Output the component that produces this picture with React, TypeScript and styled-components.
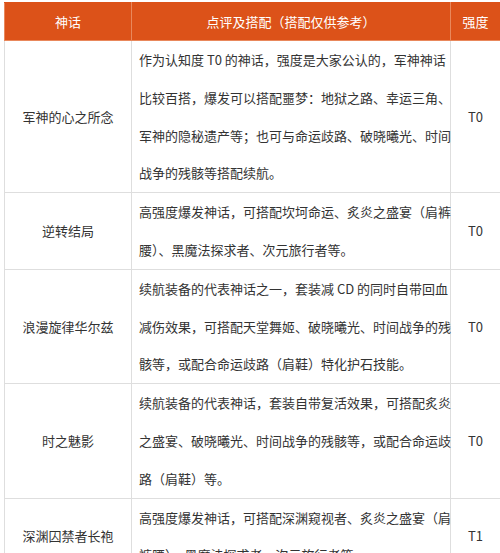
import styled, {createGlobalStyle} from "styled-components";

interface Row {
    name: string;
    lines: string[];
    tier: string;
}

const ROWS: Row[] = [
    {
        name: '军神的心之所念',
        lines: [
            '作为认知度 T0 的神话，强度是大家公认的，军神神话',
            '比较百搭，爆发可以搭配噩梦：地狱之路、幸运三角、',
            '军神的隐秘遗产等；也可与命运歧路、破晓曦光、时间',
            '战争的残骸等搭配续航。',
        ],
        tier: 'T0',
    },
    {
        name: '逆转结局',
        lines: [
            '高强度爆发神话，可搭配坎坷命运、炙炎之盛宴（肩裤',
            '腰）、黑魔法探求者、次元旅行者等。',
        ],
        tier: 'T0',
    },
    {
        name: '浪漫旋律华尔兹',
        lines: [
            '续航装备的代表神话之一，套装减 CD 的同时自带回血',
            '减伤效果，可搭配天堂舞姬、破晓曦光、时间战争的残',
            '骸等，或配合命运歧路（肩鞋）特化护石技能。',
        ],
        tier: 'T0',
    },
    {
        name: '时之魅影',
        lines: [
            '续航装备的代表神话，套装自带复活效果，可搭配炙炎',
            '之盛宴、破晓曦光、时间战争的残骸等，或配合命运歧',
            '路（肩鞋）等。',
        ],
        tier: 'T0',
    },
    {
        name: '深渊囚禁者长袍',
        lines: [
            '高强度爆发神话，可搭配深渊窥视者、炙炎之盛宴（肩',
            '裤腰）、黑魔法探求者、次元旅行者等。',
        ],
        tier: 'T1',
    },
];

const GlobalStyle = createGlobalStyle`
  body {
    margin: 0;
    background: #fff;
    font-family: "Noto Sans CJK SC", "Noto Sans", sans-serif;
  }
`;

const Page = styled.div`
  padding: 2px 0 0 4px;
  height: 553px;
  overflow: hidden;
`;

const Table = styled.table`
  border-collapse: collapse;
  table-layout: fixed;
  width: 493px;
  font-size: 13px;
  color: #333;
`;

const HeadCell = styled.th<{ $width: number }>`
  width: ${p => p.$width}px;
  height: 37px;
  padding: 0;
  background: #dc5219;
  color: #fff;
  font-weight: normal;
  text-align: center;
  border: 1px solid #e9885c;
  border-top-color: #dc5219;
`;

const Cell = styled.td<{ $center?: boolean }>`
  padding: 0 ${p => p.$center ? 0 : 5}px 0 ${p => p.$center ? 0 : 7}px;
  border: 1px solid #dedede;
  line-height: 37.8px;
  text-align: ${p => p.$center ? 'center' : 'left'};
  vertical-align: middle;
`;

const Line = styled.div`
  white-space: nowrap;
`;

export default function App() {
    return (
        <Page>
            <GlobalStyle/>
            <Table>
                <thead>
                <tr>
                    <HeadCell $width={126}>神话</HeadCell>
                    <HeadCell $width={318}>点评及搭配（搭配仅供参考）</HeadCell>
                    <HeadCell $width={49}>强度</HeadCell>
                </tr>
                </thead>
                <tbody>
                {ROWS.map(row => (
                    <tr key={row.name}>
                        <Cell $center>{row.name}</Cell>
                        <Cell>
                            {row.lines.map(line => <Line key={line}>{line}</Line>)}
                        </Cell>
                        <Cell $center>{row.tier}</Cell>
                    </tr>
                ))}
                </tbody>
            </Table>
        </Page>
    );
}
